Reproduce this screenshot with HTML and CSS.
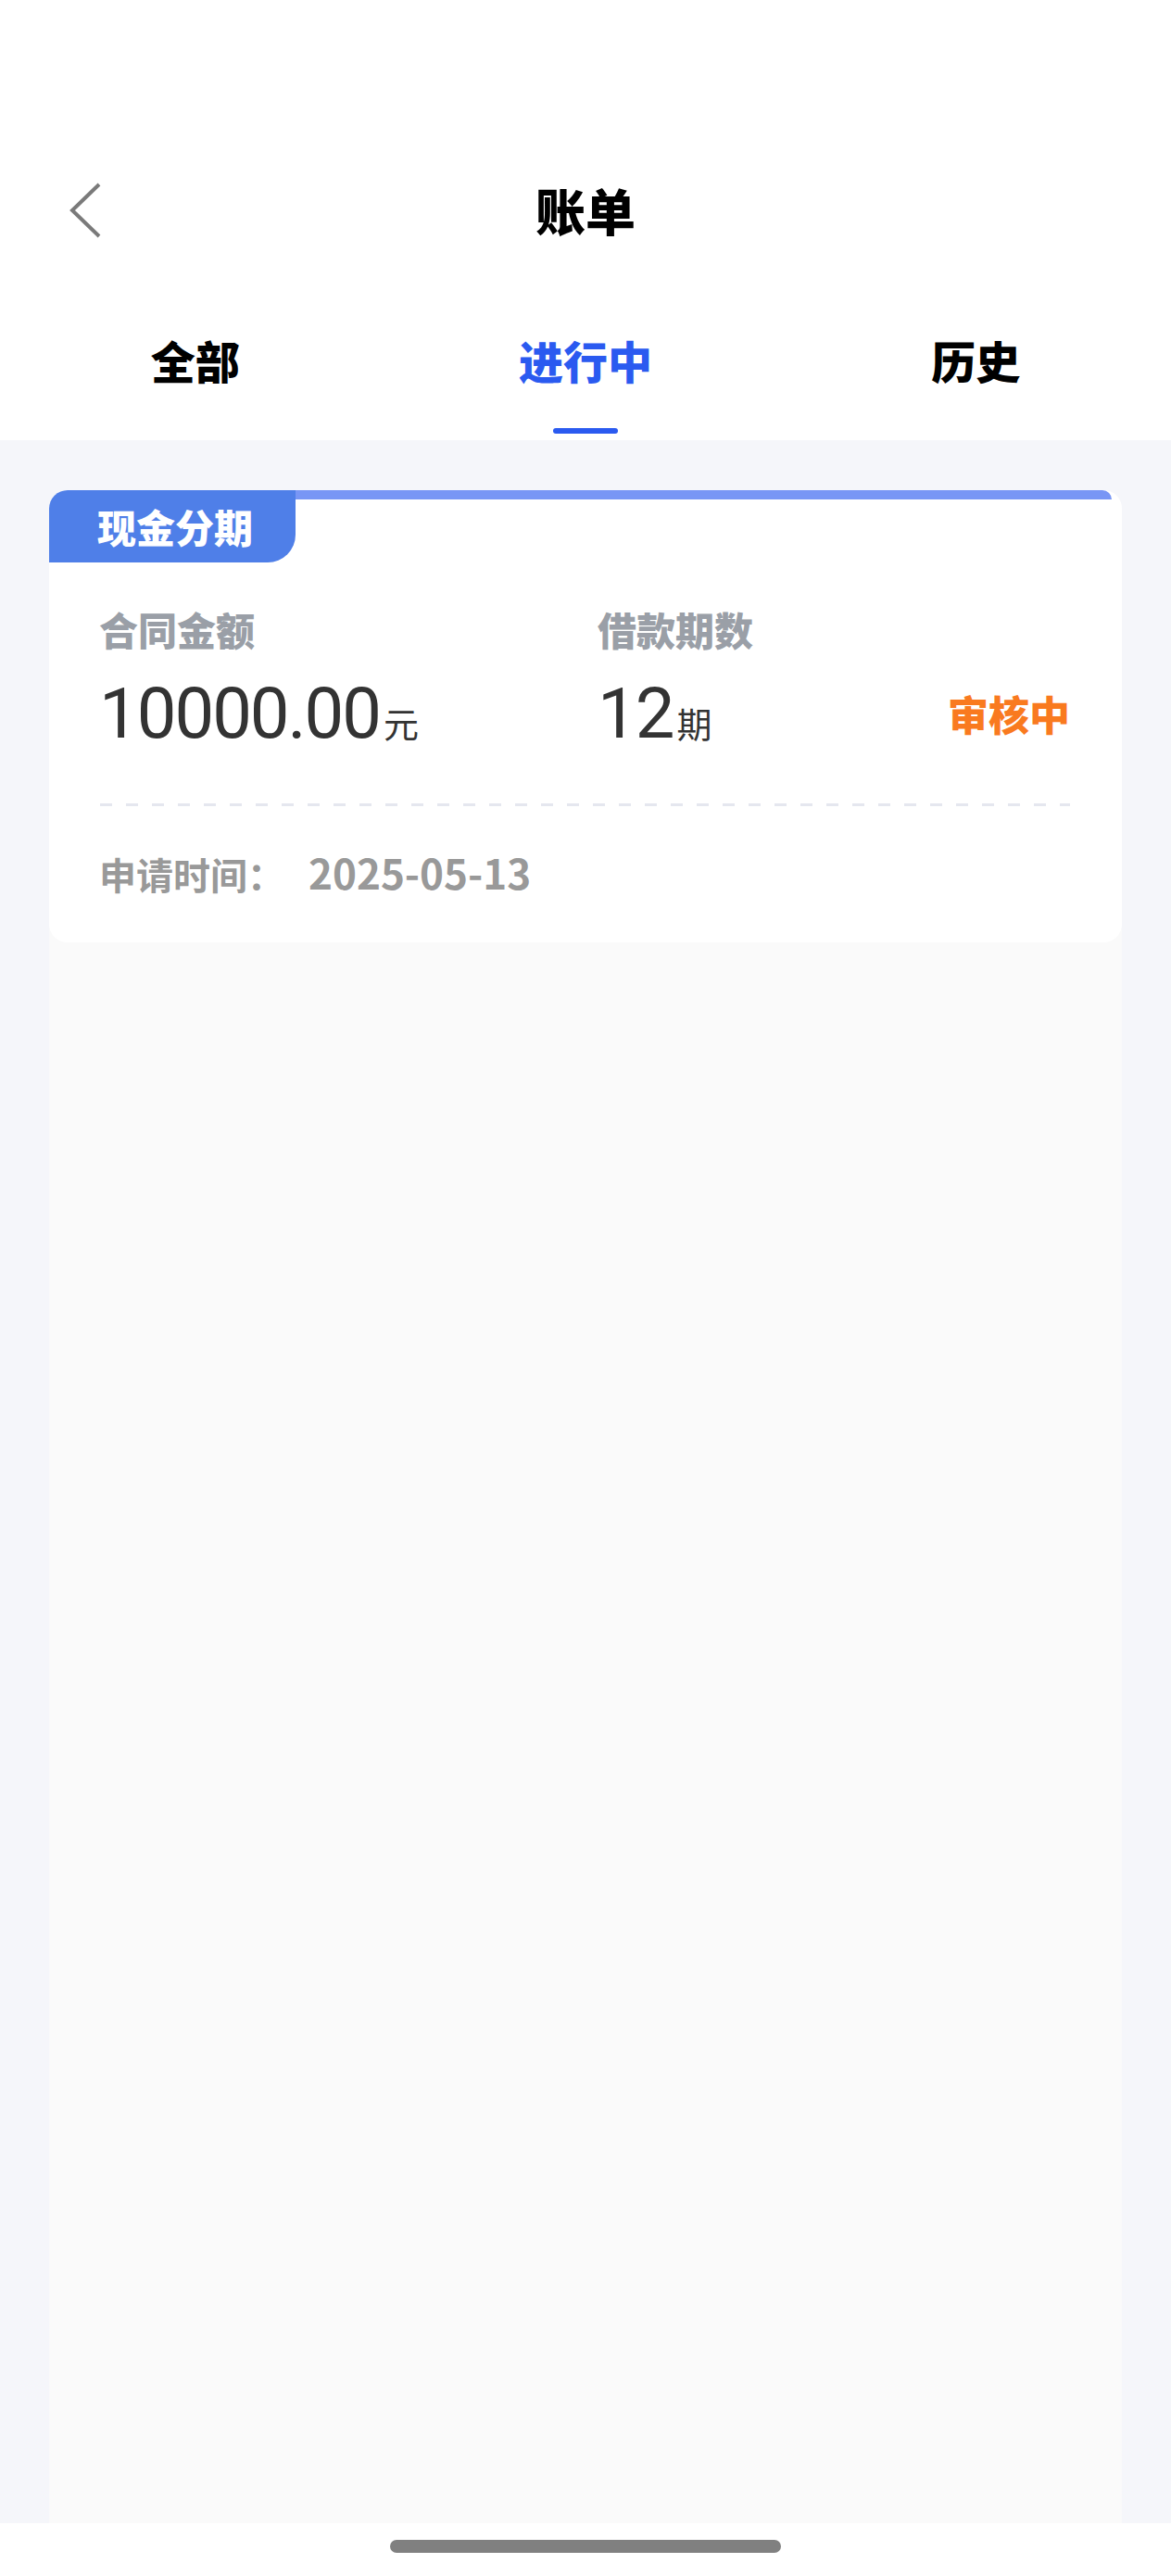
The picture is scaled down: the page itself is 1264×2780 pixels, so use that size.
FILE: index.html
```html
<!DOCTYPE html>
<html lang="zh-CN">
<head>
    <meta charset="UTF-8">
    <title>账单</title>
    <link rel="stylesheet" href="styles.css">
</head>
<body>
<div class="page">
    <!--顶部-->
    <div class="header">
        <div class="status"></div>
        <div class="nav">
            <span class="back">
                <svg width="36" height="60" viewBox="0 0 36 60"><polyline points="33,2 4,30 33,58" fill="none" stroke="#7a7a7a" stroke-width="4"/></svg>
            </span>
            <span class="title">账单</span>
            <span></span>
        </div>
        <!--标签-->
        <div class="tabs">
            <div class="tab">全部</div>
            <div class="tab active">进行中<i></i></div>
            <div class="tab">历史</div>
        </div>
    </div>

    <div class="content">
        <div class="list">
            <div class="card">
                <div class="card-top">
                    <span class="tag">现金分期</span>
                    <span class="strip"></span>
                </div>
                <div class="info">
                    <span class="label">合同金额</span>
                    <span class="label">借款期数</span>
                    <span></span>
                    <span class="value">10000.00<em>元</em></span>
                    <span class="value">12<em>期</em></span>
                    <span class="state">审核中</span>
                </div>
                <div class="dash"></div>
                <div class="apply">
                    <span>申请时间：</span>
                    <span class="date">2025-05-13</span>
                </div>
            </div>
        </div>
    </div>

    <div class="footer"><div class="home-bar"></div></div>
</div>
</body>
</html>
```

FILE: styles.css
```css
*{
    margin:0;
    padding:0;
}
body{
    font-family:"Noto Sans CJK SC","Noto Sans",sans-serif;
    background-color:#fff;
}
.page{
    width:1264px;
}
.header{
    background-color:#fff;
}
.status{
    height:168px;
}
.nav{
    height:118px;
    display:grid;
    grid-template-columns:1fr auto 1fr;
    align-items:center;
    padding:0 74px;
}
.back{
    display:flex;
    align-items:center;
}
.title{
    font-size:54px;
    font-weight:900;
    line-height:60px;
    color:#000;
}
.tabs{
    display:flex;
    height:189px;
}
.tab{
    flex:1;
    display:flex;
    flex-direction:column;
    align-items:center;
    padding-top:78px;
    font-size:48px;
    font-weight:900;
    line-height:48px;
    color:#000;
}
.tab i{
    display:block;
    width:70px;
    height:6px;
    border-radius:3px;
    margin-top:50px;
    background-color:#2a5af0;
}
.tab.active{
    color:#2a5af0;
}
.content{
    background-color:#f5f6fa;
    padding:54px 53px 0;
}
.list{
    height:2194px;
    background-color:#fafafa;
    border-radius:20px 20px 0 0;
}
.card{
    background-color:#fff;
    border-radius:20px;
    padding-bottom:52px;
}
.card-top{
    display:flex;
    align-items:flex-start;
}
.tag{
    height:78px;
    padding:0 46px 0 52px;
    font-size:42px;
    font-weight:900;
    line-height:78px;
    color:#fff;
    background-color:#4f7fe8;
    border-radius:20px 0 30px 0;
}
.strip{
    flex:1;
    height:10px;
    margin-right:11px;
    background-color:#7896f5;
    border-radius:0 10px 0 0;
}
.info{
    display:grid;
    grid-template-columns:538px 1fr auto;
    align-items:center;
    row-gap:32px;
    padding:51px 56px 0 54px;
}
.label{
    font-size:42px;
    font-weight:900;
    line-height:42px;
    color:#9a9fa7;
}
.value{
    font-family:Roboto,"Noto Sans CJK SC",sans-serif;
    font-size:76px;
    line-height:76px;
    letter-spacing:-2px;
    color:#333;
}
.value em{
    font-style:normal;
    font-family:"Noto Sans CJK SC",sans-serif;
    font-size:38px;
    line-height:1;
    letter-spacing:0;
    margin-left:4px;
}
.state{
    font-size:44px;
    font-weight:900;
    line-height:44px;
    color:#f97a1f;
}
.dash{
    height:3px;
    margin:59px 56px 0 55px;
    background-image:linear-gradient(to right,#e5e7ef 13px,transparent 13px);
    background-size:28px 3px;
}
.apply{
    display:flex;
    align-items:baseline;
    padding:49px 0 0 54px;
    font-size:40px;
    font-weight:700;
    line-height:44px;
    color:#999;
}
.date{
    font-size:44px;
    margin-left:26px;
}
.footer{
    height:57px;
    padding-top:18px;
    box-sizing:border-box;
}
.home-bar{
    width:422px;
    height:14px;
    border-radius:7px;
    margin:0 auto;
    background-color:#808080;
}
```
